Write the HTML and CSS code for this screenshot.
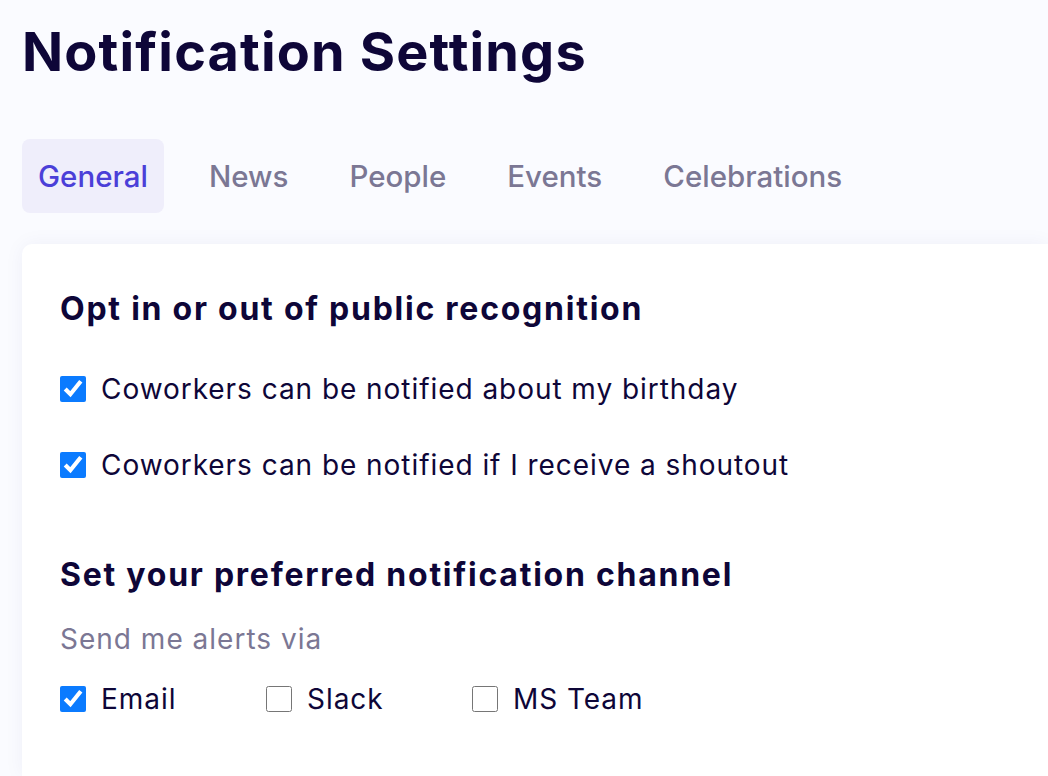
FILE: index.html
```html
<!DOCTYPE html>
<html lang="en">
<head>
<meta charset="utf-8">
<title>Notification Settings</title>
<link rel="stylesheet" href="styles.css">
</head>
<body>
<main class="page">
  <h1 class="title">Notification Settings</h1>
  <nav class="tabs">
    <a class="tab active">General</a>
    <a class="tab">News</a>
    <a class="tab">People</a>
    <a class="tab">Events</a>
    <a class="tab">Celebrations</a>
  </nav>
  <section class="card">
    <h2 class="heading">Opt in or out of public recognition</h2>
    <div class="options">
      <label class="option"><input type="checkbox" checked><span>Coworkers can be notified about my birthday</span></label>
      <label class="option"><input type="checkbox" checked><span>Coworkers can be notified if I receive a shoutout</span></label>
    </div>
    <h2 class="heading second">Set your preferred notification channel</h2>
    <p class="hint">Send me alerts via</p>
    <div class="channels">
      <label class="option channel"><input type="checkbox" checked><span>Email</span></label>
      <label class="option channel"><input type="checkbox"><span>Slack</span></label>
      <label class="option channel"><input type="checkbox"><span>MS Team</span></label>
    </div>
  </section>
</main>
</body>
</html>
```
FILE: styles.css
```css
html, body {
  margin: 0;
  padding: 0;
  height: 100%;
}
body {
  background: #fafbff;
  font-family: Inter, "Noto Sans", sans-serif;
  color: #0e0638;
  overflow: hidden;
}
.page {
  padding: 20px 0 0 22px;
  display: flex;
  flex-direction: column;
  height: 100%;
  box-sizing: border-box;
}
.title {
  margin: 0;
  font-size: 54px;
  font-weight: 700;
  line-height: 64px;
  letter-spacing: 1.15px;
  color: #0e0638;
}
.tabs {
  display: flex;
  margin-top: 55px;
}
.tab {
  font-size: 29.5px;
  font-weight: 500;
  color: #7b7794;
  padding: 0 16px;
  height: 74px;
  display: flex;
  align-items: center;
  border-radius: 8px;
  margin-right: 29px;
}
.tab.active {
  background: #efeefb;
  color: #4b3fd8;
}
.card {
  margin-top: 31px;
  flex: 1;
  background: #ffffff;
  border-radius: 10px 0 0 0;
  box-shadow: 0 0 20px rgba(40, 40, 120, 0.05);
  padding: 45px 38px;
}
.heading {
  margin: 0;
  font-size: 32px;
  font-weight: 700;
  line-height: 40px;
  letter-spacing: 1.75px;
  color: #0e0638;
}
.heading.second {
  margin-top: 70px;
}
.options {
  display: flex;
  flex-direction: column;
  gap: 36px;
  margin-top: 40px;
}
.option {
  display: flex;
  align-items: center;
  font-size: 28px;
  line-height: 40px;
  letter-spacing: 0.95px;
  color: #0e0638;
}
.option input {
  width: 26px;
  height: 26px;
  margin: 0 15px 0 0;
  accent-color: #0b7bff;
}
.hint {
  margin: 24px 0 0;
  font-size: 28px;
  line-height: 40px;
  letter-spacing: 1px;
  color: #7b7794;
}
.channels {
  display: flex;
  margin-top: 20px;
}
.channel {
  width: 206px;
}
```
